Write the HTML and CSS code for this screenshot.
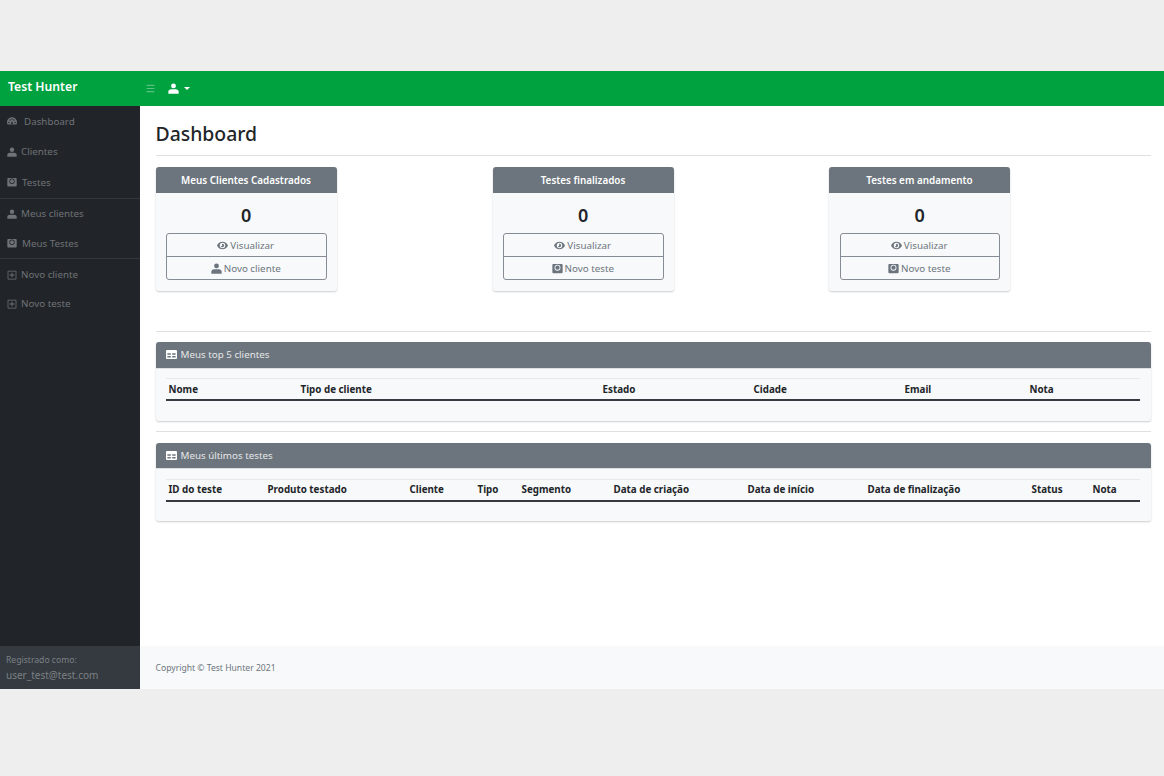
FILE: index.html
```html
<!DOCTYPE html>
<html lang="pt-BR">
<head>
<meta charset="utf-8">
<title>Dashboard - Test Hunter</title>
<link rel="stylesheet" href="styles.css">
</head>
<body>
<svg class="defs" width="0" height="0" aria-hidden="true">
  <symbol id="i-user" viewBox="0 0 16 16"><circle cx="8" cy="4.300" r="3.500"/><path d="M0.500 15.500v-2.800C.5 10.300 2.500 9 4.500 9h7c2 0 4 1.300 4 3.700v2.800z"/></symbol>
  <symbol id="i-gauge" viewBox="0 0 16 16"><path fill-rule="evenodd" d="M8 2C3.600 2 0 5.600 0 10c0 1.400.4 2.600 1 3.700h14c.6-1.100 1-2.300 1-3.700 0-4.400-3.600-8-8-8zM3 9a1.200 1.200 0 1 1 0 2.400A1.200 1.200 0 0 1 3 9zm1.800-3.700a1.200 1.200 0 1 1 0 2.400 1.200 1.200 0 0 1 0-2.400zm6.400 0a1.200 1.200 0 1 1 0 2.400 1.200 1.200 0 0 1 0-2.400zM13 9a1.200 1.200 0 1 1 0 2.400A1.200 1.200 0 0 1 13 9zM8 3.700a1.200 1.200 0 1 1 0 2.400 1.200 1.200 0 0 1 0-2.400zm-.8 6.700L8 7l.8 3.400a1.500 1.500 0 1 1-1.600 0z"/></symbol>
  <symbol id="i-test" viewBox="0 0 16 16"><path fill-rule="evenodd" d="M2 1.500h12A1.500 1.500 0 0 1 15.500 3v10.500A1.500 1.500 0 0 1 14 15H2a1.500 1.500 0 0 1-1.500-1.500V3A1.500 1.500 0 0 1 2 1.500zm6 1a4.300 4.300 0 1 0 0 8.600 4.300 4.300 0 0 0 0-8.600z"/><circle cx="8" cy="6.800" r="3.100"/></symbol>
  <symbol id="i-plus" viewBox="0 0 16 16"><path fill-rule="evenodd" d="M2 1h12a1 1 0 0 1 1 1v12a1 1 0 0 1-1 1H2a1 1 0 0 1-1-1V2a1 1 0 0 1 1-1zm.2 1.200v11.600h11.600V2.200zM7.300 4h1.400v3.300H12v1.400H8.700V12H7.300V8.700H4V7.300h3.300z"/></symbol>
  <symbol id="i-eye" viewBox="0 0 16 16"><path fill-rule="evenodd" d="M8 2.500c3.700 0 6.700 2.400 8 5.500-1.300 3.100-4.300 5.500-8 5.500S1.300 11.100 0 8c1.300-3.100 4.300-5.500 8-5.500zM8 4a4 4 0 1 0 0 8 4 4 0 0 0 0-8zm0 1.600a2.400 2.400 0 1 1-2.300 3A1.300 1.300 0 0 0 7.400 6.700a1.300 1.300 0 0 0-.1-1z"/></symbol>
  <symbol id="i-table" viewBox="0 0 16 16"><path fill-rule="evenodd" d="M1.500 1.500h13A1.500 1.500 0 0 1 16 3v10a1.500 1.500 0 0 1-1.500 1.500h-13A1.500 1.500 0 0 1 0 13V3a1.500 1.500 0 0 1 1.500-1.500zM2 6v2.500h5V6zm7 0v2.500h5V6zm-7 4v2.500h5V10zm7 0v2.500h5V10z"/></symbol>
  <symbol id="i-bars" viewBox="0 0 16 16"><path d="M1 1.500h14v2.200H1zM1 6.900h14v2.200H1zM1 12.300h14v2.200H1z"/></symbol>
</svg>

<div class="app">
  <header class="topbar">
    <a class="brand">Test Hunter</a>
    <span class="toggle"><svg class="ico"><use href="#i-bars"/></svg></span>
    <span class="account"><svg class="ico"><use href="#i-user"/></svg><span class="caret"></span></span>
  </header>
  <div class="body">
    <nav class="sidebar">
      <ul class="menu">
        <li class="gap-l"><svg class="ico"><use href="#i-gauge"/></svg>Dashboard</li>
        <li><svg class="ico"><use href="#i-user"/></svg>Clientes</li>
        <li class="gap-m"><svg class="ico"><use href="#i-test"/></svg>Testes</li>
        <li class="sep"><svg class="ico"><use href="#i-user"/></svg>Meus clientes</li>
        <li class="gap-m"><svg class="ico"><use href="#i-test"/></svg>Meus Testes</li>
        <li class="sep"><svg class="ico"><use href="#i-plus"/></svg>Novo cliente</li>
        <li><svg class="ico"><use href="#i-plus"/></svg>Novo teste</li>
      </ul>
      <div class="session">
        <div class="session-label">Registrado como:</div>
        <div class="session-user">user_test@test.com</div>
      </div>
    </nav>
    <div class="main">
      <main class="content">
        <h1>Dashboard</h1>
        <hr class="rule rule-title">
        <section class="stats">
          <article class="stat">
            <div class="stat-head">Meus Clientes Cadastrados</div>
            <div class="stat-body">
              <div class="stat-num">0</div>
              <div class="btns">
                <a class="btn"><svg class="ico"><use href="#i-eye"/></svg>Visualizar</a>
                <a class="btn"><svg class="ico"><use href="#i-user"/></svg>Novo cliente</a>
              </div>
            </div>
          </article>
          <article class="stat">
            <div class="stat-head">Testes finalizados</div>
            <div class="stat-body">
              <div class="stat-num">0</div>
              <div class="btns">
                <a class="btn"><svg class="ico"><use href="#i-eye"/></svg>Visualizar</a>
                <a class="btn"><svg class="ico"><use href="#i-test"/></svg>Novo teste</a>
              </div>
            </div>
          </article>
          <article class="stat">
            <div class="stat-head">Testes em andamento</div>
            <div class="stat-body">
              <div class="stat-num">0</div>
              <div class="btns">
                <a class="btn"><svg class="ico"><use href="#i-eye"/></svg>Visualizar</a>
                <a class="btn"><svg class="ico"><use href="#i-test"/></svg>Novo teste</a>
              </div>
            </div>
          </article>
        </section>
        <hr class="rule rule-stats">
        <section class="panel">
          <div class="panel-head"><svg class="ico"><use href="#i-table"/></svg>Meus top 5 clientes</div>
          <div class="panel-body">
            <table class="grid t-clients">
              <colgroup><col class="c1"><col class="c2"><col class="c3"><col class="c4"><col class="c5"><col class="c6"></colgroup>
              <thead><tr><th>Nome</th><th>Tipo de cliente</th><th>Estado</th><th>Cidade</th><th>Email</th><th>Nota</th></tr></thead>
            </table>
          </div>
        </section>
        <hr class="rule rule-panel">
        <section class="panel">
          <div class="panel-head"><svg class="ico"><use href="#i-table"/></svg>Meus últimos testes</div>
          <div class="panel-body">
            <table class="grid t-tests">
              <colgroup><col class="d1"><col class="d2"><col class="d3"><col class="d4"><col class="d5"><col class="d6"><col class="d7"><col class="d8"><col class="d9"><col class="d10"></colgroup>
              <thead><tr><th>ID do teste</th><th>Produto testado</th><th>Cliente</th><th>Tipo</th><th>Segmento</th><th>Data de criação</th><th>Data de início</th><th>Data de finalização</th><th>Status</th><th>Nota</th></tr></thead>
            </table>
          </div>
        </section>
      </main>
      <footer class="foot">Copyright © Test Hunter 2021</footer>
    </div>
  </div>
</div>
</body>
</html>
```

FILE: styles.css
```css
* { box-sizing: border-box; }
html, body { margin: 0; height: 100%; }
body {
  background: #eeeeee;
  font-family: "Noto Sans", "Open Sans", sans-serif;
  color: #212529;
  padding-top: 71px;
  overflow: hidden;
}
.defs { position: absolute; }
.ico { width: 1em; height: 1em; fill: currentColor; flex: none; }
.app { height: 618px; display: flex; flex-direction: column; background: #fff; }

.topbar { height: 35px; flex: none; background: #00a240; display: flex; align-items: center; color: #fff; }
.brand { width: 140px; padding-left: 8px; font-size: 12.200px; font-weight: 600; margin-top: -5px; }
.toggle { font-size: 9px; margin-left: 5.500px; display: flex; color: rgba(255,255,255,.35); }
.account { margin-left: 13px; display: flex; align-items: center; font-size: 11px; }
.caret { margin-left: 5px; border: 3px solid transparent; border-top-color: #fff; border-bottom: 0; }

.body { flex: 1; display: flex; min-height: 0; }
.sidebar { width: 140px; flex: none; background: #212529; display: flex; flex-direction: column; color: #6f7276; }
.menu { list-style: none; margin: 0; padding: 0; flex: 1; font-size: 9.800px; }
.menu li { height: 30.400px; padding-left: 7px; display: flex; align-items: center; gap: 4px; }
.menu li:first-child { height: 30.800px; }
.menu li .ico { font-size: 10px; }
.menu li.gap-l { gap: 7px; }
.menu li.gap-m { gap: 5px; }
.menu li.sep { border-top: 1px solid #33383d; padding-top: 1px; }
.session { height: 43px; background: #343a40; padding: 8px 6px 0; color: #7c8085; }
.session-label { font-size: 8.600px; line-height: 13px; }
.session-user { font-size: 10px; line-height: 16px; }

.main { flex: 1; min-width: 0; display: flex; flex-direction: column; }
.content { flex: 1; padding: 0 13.500px 0 15.500px; }
h1 { margin: 0; padding-top: 16px; font-size: 19.400px; line-height: 24px; font-weight: 500; height: 49px; }
.rule { border: 0; border-top: 1px solid #dfe0e1; margin: 0; }
.rule-title { margin-bottom: 11px; }
.rule-stats { margin-top: 40px; margin-bottom: 10px; }
.rule-panel { margin-top: 10px; margin-bottom: 11px; }

.stats { display: grid; grid-template-columns: 337px 336.500px 181px; }
.stat { width: 181px; border-radius: 3px; background: #f8f9fa; box-shadow: 0 1px 2px rgba(0,0,0,.2); overflow: hidden; }
.stat-head { height: 26px; background: #6c757d; color: #fff; font-size: 9.900px; font-weight: 600; display: flex; align-items: center; justify-content: center; }
.stat-body { height: 98px; padding: 0 10px 0 10.500px; }
.stat-num { height: 40px; display: flex; align-items: center; justify-content: center; font-size: 18px; font-weight: 600; padding-top: 4px; }
.btns { border: 1px solid #868c93; border-radius: 3px; height: 47px; display: flex; flex-direction: column; }
.btn { height: 22px; flex: none; color: #6c757d; font-size: 9.800px; display: flex; align-items: center; justify-content: center; gap: 2px; padding-right: 1px; }
.btn .ico { font-size: 11px; }
.btn + .btn { height: 23px; border-top: 1px solid #868c93; }

.panel { background: #f8f9fa; border-radius: 3px; box-shadow: 0 1px 2px rgba(0,0,0,.2); overflow: hidden; }
.panel-head { height: 26.500px; background: #6c757d; color: #e4e6e8; font-size: 9.800px; display: flex; align-items: center; gap: 4px; padding-left: 10px; border-bottom: 1px solid #dfe0e1; }
.panel-head .ico { font-size: 11px; color: #fff; }
.panel-body { height: 52px; padding: 9.500px 10px 0; }
.grid { width: 974px; table-layout: fixed; border-collapse: collapse; font-size: 9.800px; }
.grid th { text-align: left; padding: 0 3px; height: 21.500px; font-weight: 700; color: #212529; border-top: 1px solid #e6e8ea; border-bottom: 2px solid #343a40; white-space: nowrap; }
.c1 { width: 132px; } .c2 { width: 302px; } .c3 { width: 151px; } .c4 { width: 151px; } .c5 { width: 125px; } .c6 { width: 113px; }
.d1 { width: 99px; } .d2 { width: 142px; } .d3 { width: 68px; } .d4 { width: 44px; } .d5 { width: 92px; } .d6 { width: 134px; } .d7 { width: 120px; } .d8 { width: 164px; } .d9 { width: 61px; } .d10 { width: 50px; }

.foot { height: 43px; flex: none; background: #f8f9fa; color: #6c757d; font-size: 8.600px; display: flex; align-items: center; padding-left: 15.500px; }
```
